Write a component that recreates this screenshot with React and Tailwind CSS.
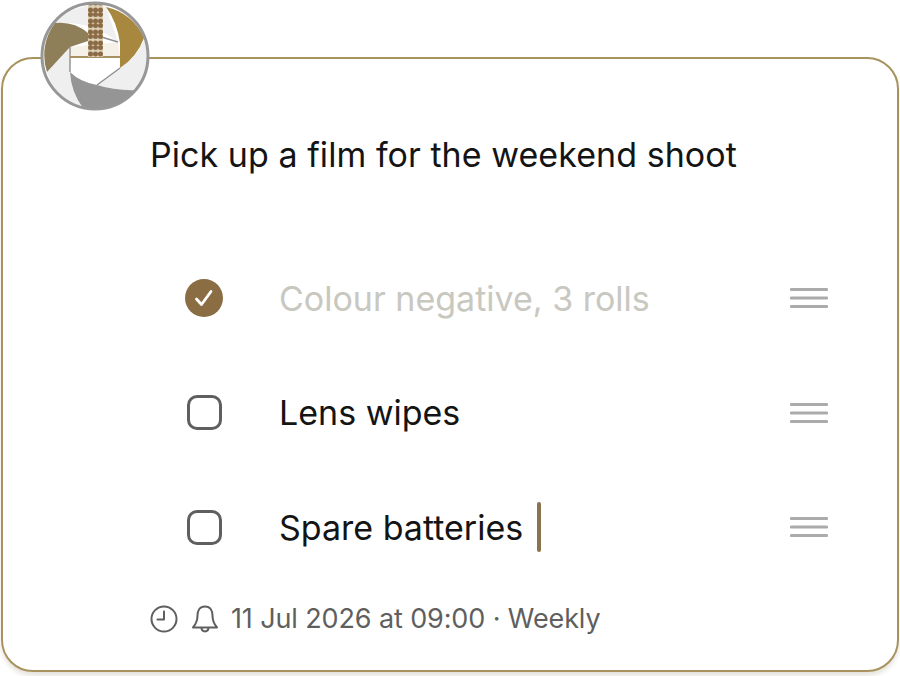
import React from "react";

const FONT = "font-['Inter','Noto_Sans',sans-serif]";

const Logo = () => (
  <svg viewBox="0 0 110 112" className="absolute left-[40px] top-0 w-[110px] h-[112px]">
    <defs>
      <clipPath id="lens">
        <circle cx="55" cy="56" r="53" />
      </clipPath>
    </defs>
    <circle cx="55" cy="56" r="53" fill="#fff" />
    <g clipPath="url(#lens)">
      {/* center hole, upper half is tinted */}
      <path d="M30 47L78 42L80 57H30Z" fill="#f6f1e8" />
      {/* light petals */}
      <path d="M15 23A53 53 0 0 1 66 7L78 42Q50 20 15 23Z" fill="#efefef" />
      <path d="M7 72L30 47V72Q31 92 43 108A53 53 0 0 1 7 72Z" fill="#efefef" />
      <path d="M80 68Q97 57 104 40A53 53 0 0 1 98 90Q76 91 57 85Z" fill="#efefef" />
      {/* gold petal */}
      <path d="M66 7A53 53 0 0 1 104 38Q97 57 80 68L80 43Q77 22 66 7Z" fill="#a8873f" />
      {/* brown petal */}
      <path d="M15 23Q34 21 48 33L48 41L30 47L7 72A53 53 0 0 1 15 23Z" fill="#8f7f58" />
      {/* gray petal */}
      <path d="M30 72Q40 82 57 85Q76 91 98 90A53 53 0 0 1 43 108Q31 92 30 72Z" fill="#959595" />
      {/* petal edges */}
      <path d="M48 33L78 42M30 47V72M57 85L80 68" fill="none" stroke="#8f8f8f" strokeWidth="1.4" />
      {/* gold line */}
      <path d="M30 57H80" stroke="#a89060" strokeWidth="2" />
      {/* stripe */}
      <rect x="48" y="0" width="15" height="57" fill="#ddd0b5" />
      <path d="M50.5 3H61M50.5 10H61M50.5 14.500H61M50.5 21H61M50.5 25.500H61M50.5 32H61M50.5 36.500H61M50.5 43H61M50.5 47.500H61M50.5 54H61" fill="none" stroke="#8a6b45" strokeWidth="5" strokeDasharray="0 5" strokeLinecap="round" />
    </g>
    <circle cx="55" cy="56" r="53" fill="none" stroke="#979797" strokeWidth="3" />
  </svg>
);

const Handle = () => (
  <svg viewBox="0 0 38 24" className="w-[38px] h-[24px]">
    <path d="M1.5 3.5H36.5M1.5 12H36.5M1.5 20.5H36.5" stroke="#ababab" strokeWidth="3.2" strokeLinecap="round" />
  </svg>
);

const Checked = () => (
  <div className="w-[38px] h-[38px] rounded-full bg-[#8a6d43] flex items-center justify-center">
    <svg viewBox="0 0 38 38" className="w-[38px] h-[38px]">
      <path d="M11.5 20L16.5 25.5L26 12.5" fill="none" stroke="#fff" strokeWidth="2.8" strokeLinecap="round" strokeLinejoin="round" />
    </svg>
  </div>
);

const Unchecked = () => (
  <div className="w-[35px] h-[35px] rounded-[10px] border-[3px] border-[#5f5f5f]" />
);

const Row = ({ done, text, cursor }) => (
  <div className="h-[114.5px] flex items-center pl-[184px] pr-[69px]">
    <div className="w-[38px] flex justify-center shrink-0">{done ? <Checked /> : <Unchecked />}</div>
    <div className={`ml-[56px] flex-1 flex items-center text-[34px] ${done ? "text-[#c8c8c0]" : "text-[#141414]"}`}>
      {text}
      {cursor && <span className="ml-[14px] w-[4px] h-[50px] rounded-full bg-[#8a7350]" />}
    </div>
    <Handle />
  </div>
);

export default function App() {
  return (
    <div className={`relative w-[900px] h-[676px] bg-white overflow-hidden ${FONT}`}>
      <div className="mt-[57px] mx-[1px] h-[615px] absolute inset-x-0 top-0 rounded-[32px] border-2 border-[#a8935f] bg-white shadow-[0_4px_4px_rgba(120,110,80,0.18)]">
        <div className="pl-[147px] pt-[74px] text-[34px] tracking-[0.05px] leading-[44px] text-[#141414]">
          Pick up a film for the weekend shoot
        </div>
        <div className="mt-[64px] -ml-[2px]">
          <Row done text="Colour negative, 3 rolls" />
          <Row text="Lens wipes" />
          <Row text="Spare batteries" cursor />
        </div>
        <div className="mt-[14px] pl-[147px] flex items-center text-[27px] text-[#5f5f5f]">
          <svg viewBox="0 0 28 28" className="w-[28px] h-[28px]">
            <circle cx="14" cy="14" r="12.5" fill="none" stroke="#5f5f5f" strokeWidth="2" />
            <path d="M14 6.5V14.5H7.5" fill="none" stroke="#5f5f5f" strokeWidth="2" strokeLinecap="round" strokeLinejoin="round" />
          </svg>
          <svg viewBox="0 0 28 30" className="ml-[13px] w-[28px] h-[30px]">
            <path d="M14 2.5C8.5 2.5 6.5 7 6.5 11.5C6.5 17 5 20 2 23.5H26C23 20 21.5 17 21.5 11.5C21.5 7 19.5 2.5 14 2.5Z" fill="none" stroke="#5f5f5f" strokeWidth="2" strokeLinejoin="round" />
            <path d="M10.5 24C10.8 28.5 17.2 28.5 17.5 24" fill="none" stroke="#5f5f5f" strokeWidth="2" />
          </svg>
          <span className="ml-[12px] tracking-[-0.12px]">11 Jul 2026 at 09:00 · Weekly</span>
        </div>
      </div>
      <Logo />
    </div>
  );
}
